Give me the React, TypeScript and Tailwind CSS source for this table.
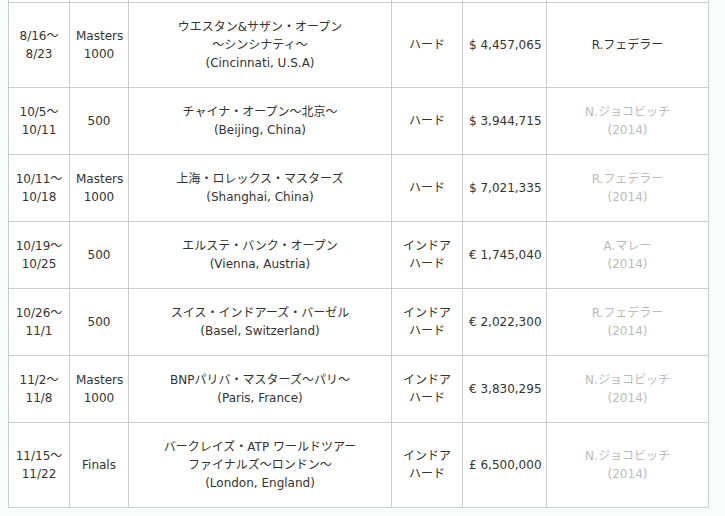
import React from 'react';

type Tournament = {
  date: string[];
  grade: string[];
  name: string[];
  surface: string[];
  prize: string;
  champion: string[];
  past: boolean;
};

const tournaments: Tournament[] = [
  {
    date: ['8/16〜', '8/23'],
    grade: ['Masters', '1000'],
    name: ['ウエスタン&サザン・オープン', '〜シンシナティ〜', '(Cincinnati, U.S.A)'],
    surface: ['ハード'],
    prize: '$ 4,457,065',
    champion: ['R.フェデラー'],
    past: false,
  },
  {
    date: ['10/5〜', '10/11'],
    grade: ['500'],
    name: ['チャイナ・オープン〜北京〜', '(Beijing, China)'],
    surface: ['ハード'],
    prize: '$ 3,944,715',
    champion: ['N.ジョコビッチ', '(2014)'],
    past: true,
  },
  {
    date: ['10/11〜', '10/18'],
    grade: ['Masters', '1000'],
    name: ['上海・ロレックス・マスターズ', '(Shanghai, China)'],
    surface: ['ハード'],
    prize: '$ 7,021,335',
    champion: ['R.フェデラー', '(2014)'],
    past: true,
  },
  {
    date: ['10/19〜', '10/25'],
    grade: ['500'],
    name: ['エルステ・バンク・オープン', '(Vienna, Austria)'],
    surface: ['インドア', 'ハード'],
    prize: '€ 1,745,040',
    champion: ['A.マレー', '(2014)'],
    past: true,
  },
  {
    date: ['10/26〜', '11/1'],
    grade: ['500'],
    name: ['スイス・インドアーズ・バーゼル', '(Basel, Switzerland)'],
    surface: ['インドア', 'ハード'],
    prize: '€ 2,022,300',
    champion: ['R.フェデラー', '(2014)'],
    past: true,
  },
  {
    date: ['11/2〜', '11/8'],
    grade: ['Masters', '1000'],
    name: ['BNPパリバ・マスターズ〜パリ〜', '(Paris, France)'],
    surface: ['インドア', 'ハード'],
    prize: '€ 3,830,295',
    champion: ['N.ジョコビッチ', '(2014)'],
    past: true,
  },
  {
    date: ['11/15〜', '11/22'],
    grade: ['Finals'],
    name: ['バークレイズ・ATP ワールドツアー', 'ファイナルズ〜ロンドン〜', '(London, England)'],
    surface: ['インドア', 'ハード'],
    prize: '£ 6,500,000',
    champion: ['N.ジョコビッチ', '(2014)'],
    past: true,
  },
];

const Lines = ({ lines }: { lines: string[] }) => (
  <>
    {lines.map((line, i) => (
      <div key={i}>{line}</div>
    ))}
  </>
);

const cell = 'border border-[#cccccc] px-[6px] py-[15px] text-center align-middle';

const App = () => {
  return (
    <div className="min-h-screen bg-[#fafbfb] pl-[8px] font-['DejaVu_Sans','Noto_Sans_CJK_JP',sans-serif] text-[12px] leading-[18px] text-[#333333]">
      <table className="w-[700px] table-fixed border-collapse bg-white">
        <colgroup>
          <col className="w-[61px]" />
          <col className="w-[59px]" />
          <col className="w-[263px]" />
          <col className="w-[71px]" />
          <col className="w-[84px]" />
          <col className="w-[162px]" />
        </colgroup>
        <tbody>
          {/* tail of the previous row, cut off by the viewport */}
          <tr className="h-[2px]">
            {[0, 1, 2, 3, 4, 5].map((i) => (
              <td key={i} className="h-[2px] border-x border-b border-t-0 border-[#cccccc] p-0" />
            ))}
          </tr>
          {tournaments.map((t) => (
            <tr key={t.date[0]}>
              <td className={cell}>
                <Lines lines={t.date} />
              </td>
              <td className={cell}>
                <Lines lines={t.grade} />
              </td>
              <td className={cell}>
                <Lines lines={t.name} />
              </td>
              <td className={cell}>
                <Lines lines={t.surface} />
              </td>
              <td className="border border-[#cccccc] px-[6px] py-[15px] text-left align-middle whitespace-nowrap">
                {t.prize}
              </td>
              <td className={`${cell} ${t.past ? 'text-[#bbbbbb]' : ''}`}>
                <Lines lines={t.champion} />
              </td>
            </tr>
          ))}
        </tbody>
      </table>
    </div>
  );
};

export default App;
